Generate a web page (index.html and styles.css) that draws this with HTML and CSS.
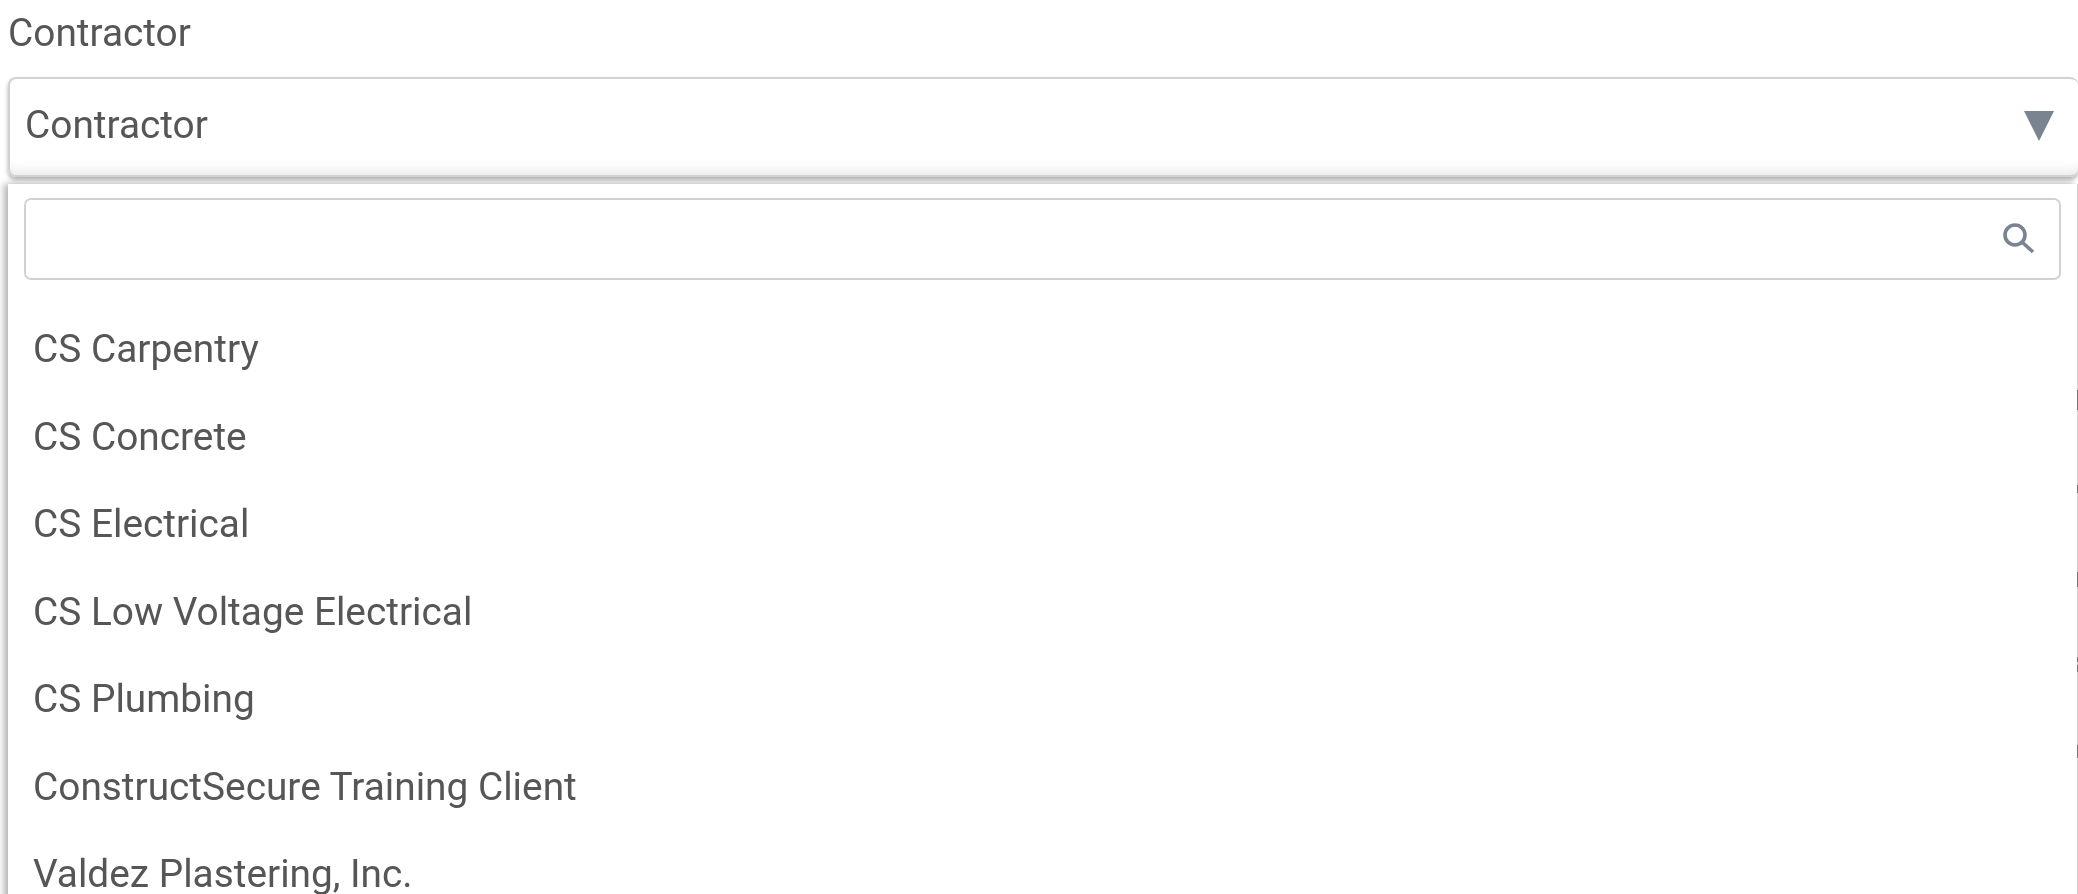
FILE: index.html
```html
<!DOCTYPE html>
<html lang="en">
  <head>
    <meta charset="UTF-8" />
    <title>Contractor</title>
    <link rel="stylesheet" href="styles.css">
  </head>
  <body>
    <main class="field">
      <label class="field-label">Contractor</label>
      <div class="select">
        <span>Contractor</span>
        <svg class="select-arrow" viewBox="0 0 30 30"><path d="M0 0H30L15 30Z"/></svg>
      </div>
      <div class="dropdown">
        <div class="search">
          <svg class="search-icon" viewBox="0 0 32 32">
            <circle cx="12" cy="12" r="10"/>
            <path d="M19.5 19.5L30 29"/>
          </svg>
        </div>
        <ul class="options">
          <li>CS Carpentry</li>
          <li>CS Concrete</li>
          <li>CS Electrical</li>
          <li>CS Low Voltage Electrical</li>
          <li>CS Plumbing</li>
          <li>ConstructSecure Training Client</li>
          <li>Valdez Plastering, Inc.</li>
        </ul>
      </div>
    </main>
    <!-- bits of the page behind the dropdown, cut off at the right edge -->
    <div class="edge-bits"></div>
  </body>
</html>
```

FILE: styles.css
```css
* {
  box-sizing: border-box;
}

html,
body {
  height: 100%;
  margin: 0;
  overflow: hidden;
  background: #fff;
}

body {
  font-family: Roboto, "Liberation Sans", sans-serif;
  font-size: 38.8px;
  color: #565656;
}

/* the reference is an upscaled capture, so everything is a little soft */
.field {
  display: flex;
  flex-direction: column;
  padding-left: 8px;
  filter: blur(0.6px);
}

.field-label {
  height: 77px;
  padding-top: 10px;
  line-height: 46px;
}

.select {
  display: flex;
  align-items: center;
  justify-content: space-between;
  height: 100px;
  padding: 0 24px 6px 15px;
  border: 2px solid #d2d2d2;
  border-right: 0;
  border-radius: 8px;
  box-shadow: inset 0 -16px 12px -12px rgba(0, 0, 0, 0.09), 0 3px 4px rgba(0, 0, 0, 0.3);
  position: relative;
  z-index: 1;
}

.select-arrow {
  width: 30px;
  height: 30px;
  margin-top: 4px;
  fill: #7a8390;
}

.dropdown {
  margin: 7px 1px 0 0;
  padding: 14px 16px 0 16px;
  background: #fff;
  box-shadow: -4px 0 7px rgba(0, 0, 0, 0.3), 1px 0 1px rgba(0, 0, 0, 0.18);
}

.search {
  display: flex;
  align-items: center;
  justify-content: flex-end;
  height: 82px;
  padding-right: 24px;
  border: 2px solid #d2d2d2;
  border-radius: 7px;
}

.search-icon {
  width: 32px;
  height: 32px;
  fill: none;
  stroke: #7a8390;
  stroke-width: 3.6;
}

.options {
  margin: 0;
  padding: 25px 0 0 9px;
  list-style: none;
}

.options li {
  height: 87.5px;
  line-height: 87.5px;
}

.edge-bits {
  position: absolute;
  top: 0;
  right: 0;
  width: 1px;
  height: 100%;
  background: linear-gradient(
    to bottom,
    transparent 390px,
    #777 390px 410px,
    transparent 410px 485px,
    #777 485px 493px,
    transparent 493px 572px,
    #777 572px 587px,
    transparent 587px 657px,
    #777 657px 662px,
    transparent 662px 665px,
    #777 665px 672px,
    transparent 672px 745px,
    #777 745px 758px,
    transparent 758px
  );
}
```
